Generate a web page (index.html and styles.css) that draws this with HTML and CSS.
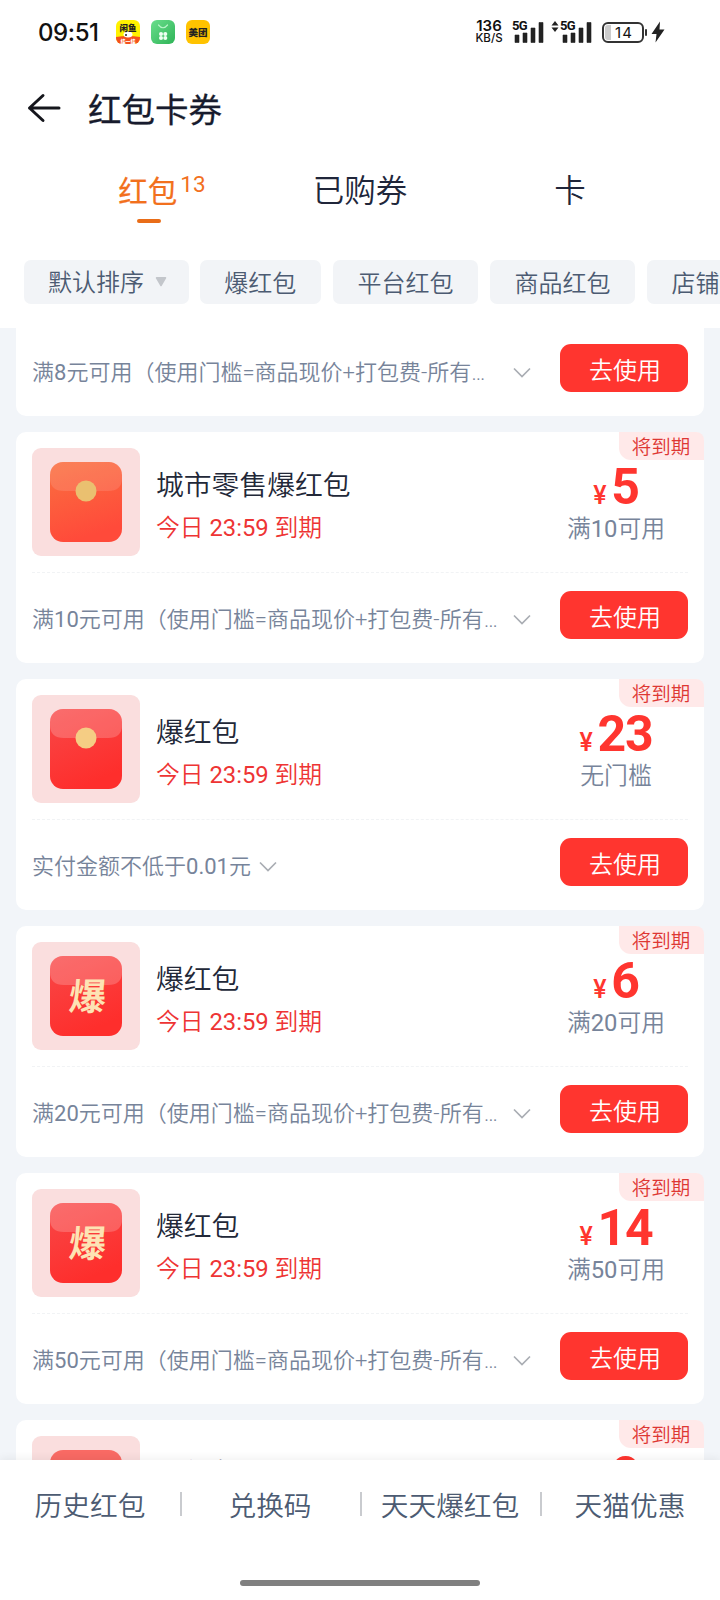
FILE: index.html
```html
<!DOCTYPE html>
<html lang="zh-CN">
<head>
<meta charset="utf-8">
<title>红包卡券</title>
<link rel="stylesheet" href="styles.css">
</head>
<body>
<div class="screen">
  <svg class="defs" width="0" height="0" aria-hidden="true">
    <defs>
      <linearGradient id="orange" x1="0" y1="0" x2="0.3" y2="1"><stop offset="0" stop-color="#fa7040"/><stop offset="1" stop-color="#ff4a3a"/></linearGradient>
      <linearGradient id="red" x1="0" y1="0" x2="0.4" y2="1"><stop offset="0" stop-color="#f84848"/><stop offset="1" stop-color="#fe2e2c"/></linearGradient>
      <linearGradient id="green" x1="0" y1="0" x2="1" y2="1"><stop offset="0" stop-color="#6ade8c"/><stop offset="1" stop-color="#2fb457"/></linearGradient>
      <symbol id="chevron" viewBox="0 0 18 12"><path d="M1 1.500 9 9.500 17 1.500" fill="none" stroke="#a9adb3" stroke-width="1.700"/></symbol>
      <symbol id="bars" viewBox="0 0 30 22"><path d="M1 14h4v7.500H1zM9 12h4v9.500H9zM17 7h4v14.500h-4zM25 1.500h4v20h-4z" fill="#222" stroke="#222" stroke-width=".6" stroke-linejoin="round"/></symbol>
    </defs>
  </svg>

  <header class="status">
    <span class="clock">09:51</span>
    <div class="apps">
      <svg width="24" height="24" viewBox="0 0 24 24"><rect width="24" height="24" rx="6" fill="#fff200"/><path d="M0 17q12-2 24 0v1a6 6 0 0 1-6 6H6a6 6 0 0 1-6-6z" fill="#f4511e"/><ellipse cx="12" cy="14.500" rx="4.500" ry="3" fill="#fff"/><circle cx="10" cy="15" r="1" fill="#222"/><text x="12" y="10.500" class="app-text app-text--fish">闲鱼</text><text x="12" y="23" class="app-text app-text--small">挂一挂</text></svg>
      <svg width="24" height="24" viewBox="0 0 24 24"><rect width="24" height="24" rx="6" fill="url(#green)"/><path d="M7.500 5q4.500 5.500 9 0" fill="none" stroke="#b9f5c9" stroke-width="1.200" stroke-linecap="round"/><g fill="#effff2"><circle cx="10" cy="14" r="2"/><circle cx="14.300" cy="14" r="2"/><circle cx="10" cy="18" r="2"/><circle cx="14.300" cy="18" r="2"/></g></svg>
      <svg width="24" height="24" viewBox="0 0 24 24"><rect width="24" height="24" rx="6" fill="#ffc300"/><text x="12" y="15.800" class="app-text app-text--mt">美团</text></svg>
    </div>
    <div class="speed"><b>136</b><span>KB/S</span></div>
    <div class="signal"><span>5G</span><svg width="30" height="22"><use href="#bars"/></svg></div>
    <svg class="updown" width="8" height="12" viewBox="0 0 8 12"><path d="M4 0 7.500 4.500h-7zM4 11 7.500 6.500h-7z" fill="#222"/></svg>
    <div class="signal signal--second"><span>5G</span><svg width="30" height="22"><use href="#bars"/></svg></div>
    <div class="battery"><i></i><span>14</span></div>
    <svg class="bolt" width="14" height="22" viewBox="0 0 14 22"><path d="M9 .5.500 13H5.500L4.500 21.500 13.500 8.500H8.500z" fill="#222"/></svg>
  </header>

  <div class="titlebar">
    <svg width="34" height="30" viewBox="0 0 34 30"><path d="M16 2.500 2.500 15 16 27.500M2.500 15H32" fill="none" stroke="#15161c" stroke-width="3" stroke-linecap="round" stroke-linejoin="round"/></svg>
    <h1>红包卡券</h1>
  </div>

  <nav class="tabs">
    <div class="tab tab--active"><span class="tab-label">红包</span><sup>13</sup></div>
    <div class="tab"><span class="tab-label">已购券</span></div>
    <div class="tab"><span class="tab-label">卡</span></div>
  </nav>

  <div class="chips">
    <span class="chip chip--sort">默认排序<svg width="12" height="10" viewBox="0 0 12 10"><path d="M1.500.8h9L6 8.500z" fill="#c3c6cb" stroke="#c3c6cb" stroke-width="1.500" stroke-linejoin="round"/></svg></span>
    <span class="chip">爆红包</span>
    <span class="chip">平台红包</span>
    <span class="chip">商品红包</span>
    <span class="chip">店铺红包</span>
  </div>

  <main class="list">
    <article class="card card--cut">
      <div class="card-foot"><p class="rule rule--long">满<span class="num">8</span>元可用（使用门槛=商品现价+打包费-所有优惠）</p><svg class="chev" width="18" height="12"><use href="#chevron"/></svg><span class="use">去使用</span></div>
    </article>

    <article class="card">
      <div class="tag">将到期</div>
      <div class="card-main">
        <svg class="thumb" width="108" height="108" viewBox="0 0 108 108"><rect width="108" height="108" rx="9" fill="#fadede"/><rect x="18" y="14" width="72" height="80" rx="13" fill="url(#orange)"/><path d="M18 27a13 13 0 0 1 13-13h46a13 13 0 0 1 13 13v3q0 13-14 13H32Q18 43 18 30z" fill="#fff" opacity=".12"/><circle cx="54" cy="43" r="10.500" fill="#eac070"/></svg>
        <div class="info"><h2>城市零售爆红包</h2><p>今日 <span class="num">23:59</span> 到期</p></div>
        <div class="price"><div class="amount"><small>¥</small>5</div><p>满<span class="num">10</span>可用</p></div>
      </div>
      <div class="card-foot"><p class="rule rule--long">满<span class="num">10</span>元可用（使用门槛=商品现价+打包费-所有优惠）</p><svg class="chev" width="18" height="12"><use href="#chevron"/></svg><span class="use">去使用</span></div>
    </article>

    <article class="card">
      <div class="tag">将到期</div>
      <div class="card-main">
        <svg class="thumb" width="108" height="108" viewBox="0 0 108 108"><rect width="108" height="108" rx="9" fill="#fadede"/><rect x="18" y="14" width="72" height="80" rx="13" fill="url(#red)"/><path d="M18 27a13 13 0 0 1 13-13h46a13 13 0 0 1 13 13v3q0 13-14 13H32Q18 43 18 30z" fill="#fff" opacity=".2"/><circle cx="54" cy="43" r="10.500" fill="#f5cd84"/></svg>
        <div class="info"><h2>爆红包</h2><p>今日 <span class="num">23:59</span> 到期</p></div>
        <div class="price"><div class="amount"><small>¥</small>23</div><p>无门槛</p></div>
      </div>
      <div class="card-foot"><p class="rule">实付金额不低于<span class="num">0.01</span>元</p><svg class="chev" width="18" height="12"><use href="#chevron"/></svg><span class="use">去使用</span></div>
    </article>

    <article class="card">
      <div class="tag">将到期</div>
      <div class="card-main">
        <svg class="thumb" width="108" height="108" viewBox="0 0 108 108"><rect width="108" height="108" rx="9" fill="#fadede"/><rect x="18" y="14" width="72" height="80" rx="13" fill="url(#red)"/><path d="M18 27a13 13 0 0 1 13-13h46a13 13 0 0 1 13 13v3q0 13-14 13H32Q18 43 18 30z" fill="#fff" opacity=".2"/><text class="burst" transform="translate(54.500 68) skewX(-5)">爆</text></svg>
        <div class="info"><h2>爆红包</h2><p>今日 <span class="num">23:59</span> 到期</p></div>
        <div class="price"><div class="amount"><small>¥</small>6</div><p>满<span class="num">20</span>可用</p></div>
      </div>
      <div class="card-foot"><p class="rule rule--long">满<span class="num">20</span>元可用（使用门槛=商品现价+打包费-所有优惠）</p><svg class="chev" width="18" height="12"><use href="#chevron"/></svg><span class="use">去使用</span></div>
    </article>

    <article class="card">
      <div class="tag">将到期</div>
      <div class="card-main">
        <svg class="thumb" width="108" height="108" viewBox="0 0 108 108"><rect width="108" height="108" rx="9" fill="#fadede"/><rect x="18" y="14" width="72" height="80" rx="13" fill="url(#red)"/><path d="M18 27a13 13 0 0 1 13-13h46a13 13 0 0 1 13 13v3q0 13-14 13H32Q18 43 18 30z" fill="#fff" opacity=".2"/><text class="burst" transform="translate(54.500 68) skewX(-5)">爆</text></svg>
        <div class="info"><h2>爆红包</h2><p>今日 <span class="num">23:59</span> 到期</p></div>
        <div class="price"><div class="amount"><small>¥</small>14</div><p>满<span class="num">50</span>可用</p></div>
      </div>
      <div class="card-foot"><p class="rule rule--long">满<span class="num">50</span>元可用（使用门槛=商品现价+打包费-所有优惠）</p><svg class="chev" width="18" height="12"><use href="#chevron"/></svg><span class="use">去使用</span></div>
    </article>

    <article class="card">
      <div class="tag">将到期</div>
      <div class="card-main">
        <svg class="thumb" width="108" height="108" viewBox="0 0 108 108"><rect width="108" height="108" rx="9" fill="#fadede"/><rect x="18" y="14" width="72" height="80" rx="13" fill="#f96a64"/></svg>
        <div class="info"><h2>爆红包</h2></div>
        <div class="price"><div class="amount"><small>¥</small>8</div></div>
      </div>
    </article>
  </main>

  <footer class="bottom">
    <div class="links"><span>历史红包</span><span>兑换码</span><span>天天爆红包</span><span>天猫优惠</span></div>
    <div class="home"></div>
  </footer>
</div>
</body>
</html>
```
FILE: styles.css
```css
* { box-sizing: border-box; margin: 0; padding: 0; }
body { background: #fff; font-family: Roboto, "Noto Sans CJK SC", sans-serif; font-weight: 350; }
svg { display: block; flex: none; }
.defs { position: absolute; }
.num { font-weight: 400; }
.screen { width: 720px; height: 1600px; display: flex; flex-direction: column; overflow: hidden; background: #fff; }

.status { height: 64px; flex: none; display: flex; align-items: center; padding-left: 38px; color: #111; }
.clock { width: 78px; font: 450 24px/30px Inter, sans-serif; letter-spacing: -.4px; padding-top: 2px; }
.apps { display: flex; gap: 11px; }
.app-text { font-family: "Noto Sans CJK SC", sans-serif; font-weight: 900; text-anchor: middle; }
.app-text--fish { font-size: 8.5px; fill: #222; }
.app-text--small { font-size: 5px; fill: #fff; }
.app-text--mt { font-size: 9.5px; fill: #222; }
.speed { width: 28px; margin-left: 265px; padding-top: 1px; display: flex; flex-direction: column; align-items: center; font: 500 11.5px/13px Inter, sans-serif; }
.speed b { font-size: 15px; line-height: 12px; font-weight: 600; }
.signal { position: relative; width: 32px; height: 22px; margin-left: 9px; display: flex; justify-content: flex-end; }
.signal span { position: absolute; left: 0; top: -1px; font: 700 13px/12px Roboto, sans-serif; background: #fff; z-index: 1; letter-spacing: -.8px; }
.updown { margin: 0 1px 10px 7px; }
.signal--second { margin-left: 0; }
.battery { position: relative; width: 42px; height: 21px; margin-left: 10px; border: 2px solid #333; border-radius: 6px; display: flex; align-items: center; justify-content: center; font: 400 15px/17px Inter, sans-serif; letter-spacing: 1px; padding-left: 2px; }
.battery i { position: absolute; left: 1px; top: 1px; width: 6px; height: 15px; background: #ccc; border-radius: 3px 0 0 3px; }
.battery::after { content: ""; position: absolute; right: -5px; top: 5px; width: 2px; height: 7px; background: #333; border-radius: 1px; }
.bolt { margin-left: 7px; }

.titlebar { height: 88px; flex: none; display: flex; align-items: center; padding-left: 27px; gap: 27px; }
h1 { font-size: 33.500px; line-height: 48px; padding-top: 5px; font-weight: 400; color: #171b2d; -webkit-text-stroke: .3px #171b2d; }

.tabs { height: 80px; flex: none; display: grid; grid-template-columns: 210px 210px 210px; padding-left: 45px; }
.tab { display: flex; justify-content: center; font-size: 31.500px; line-height: 44px; padding-top: 18px; color: #20263a; font-weight: 350; }
.tab--active { position: relative; color: #f2701d; font-weight: 400; font-size: 29.500px; padding-left: 24px; -webkit-text-stroke: .2px #f2701d; }
.tab--active::after { content: ""; position: absolute; left: 92px; top: 67px; width: 24px; height: 4px; border-radius: 2px; background: #e96d18; }
sup { font-size: 22.500px; line-height: 28px; font-weight: 400; margin-left: 3px; -webkit-text-stroke: 0; }

.chips { height: 96px; flex: none; display: flex; gap: 12.500px; padding: 28px 0 0 24px; overflow: hidden; }
.chip { flex: none; height: 44px; padding: 0 24.300px; border-radius: 7px; background: #f2f4f7; color: #4c5b72; font-size: 24px; line-height: 49px; }
.chip--sort { display: flex; align-items: center; padding: 2px 21.500px 0 24px; margin-right: -1px; }
.chip--sort svg { margin: -2px 0 0 11px; }

.list { flex: 1; min-height: 0; overflow: hidden; background: #f2f5f9; padding: 0 16px; display: flex; flex-direction: column; gap: 16px; }
.card { position: relative; flex: none; height: 231px; background: #fff; border-radius: 10px; padding: 0 16px; }
.card--cut { height: 88px; border-radius: 0 0 10px 10px; }
.card--cut .card-foot { height: 88px; padding-top: 16px; border-top: 0; }
.tag { position: absolute; right: 0; top: 0; width: 85px; height: 28px; border-radius: 0 8px 0 12px; background: #ffe9e9; color: #de3733; font-size: 19.500px; line-height: 32px; padding-right: 1px; text-align: center; }
.card-main { height: 140px; display: flex; padding-top: 16px; }
.burst { font: 700 37px "Noto Sans CJK SC", sans-serif; fill: #fde3b4; text-anchor: middle; }
.info { flex: 1; padding: 18px 0 0 16px; }
h2 { font-size: 27.800px; line-height: 40px; font-weight: 350; color: #222838; }
.info p { margin-top: 4px; font-size: 23.800px; line-height: 37px; color: #ee3434; }
.price { width: 144px; text-align: center; }
.amount { height: 63px; font: 700 50px/78px Roboto, "Noto Sans CJK SC", sans-serif; letter-spacing: -1.200px; color: #ff352f; }
.amount small { font-size: 25px; font-weight: 500; margin-right: 6px; }
.price p { font-size: 23.800px; line-height: 36px; color: #77849a; }
.card-foot { height: 91px; display: flex; border-top: 1px dashed #f1f3f5; padding-top: 18px; }
.rule { font-size: 22px; line-height: 36px; padding-top: 11px; height: 48px; color: #77849a; white-space: nowrap; }
.rule--long { width: 472px; overflow: hidden; text-overflow: ellipsis; }
.chev { margin: 23px 0 0 8.500px; }
.use { width: 128px; height: 48px; margin-left: auto; border-radius: 11px; background: #ff352f; color: #fff; font-size: 24px; line-height: 54px; padding-left: 2px; text-align: center; }

.bottom { height: 140px; flex: none; position: relative; background: #fff; box-shadow: 0 -2px 8px rgba(0, 0, 0, .06); display: flex; flex-direction: column; align-items: center; justify-content: space-between; padding-bottom: 14px; }
.links { display: grid; grid-template-columns: repeat(4, 180px); padding-top: 27px; }
.links span { position: relative; text-align: center; font-size: 27.700px; line-height: 40px; color: #4c5b72; }
.links span + span::before { content: ""; position: absolute; left: 0; top: 5px; width: 2px; height: 24px; background: #c9cbcf; }
.home { width: 240px; height: 6px; border-radius: 3px; background: #808080; }
```
